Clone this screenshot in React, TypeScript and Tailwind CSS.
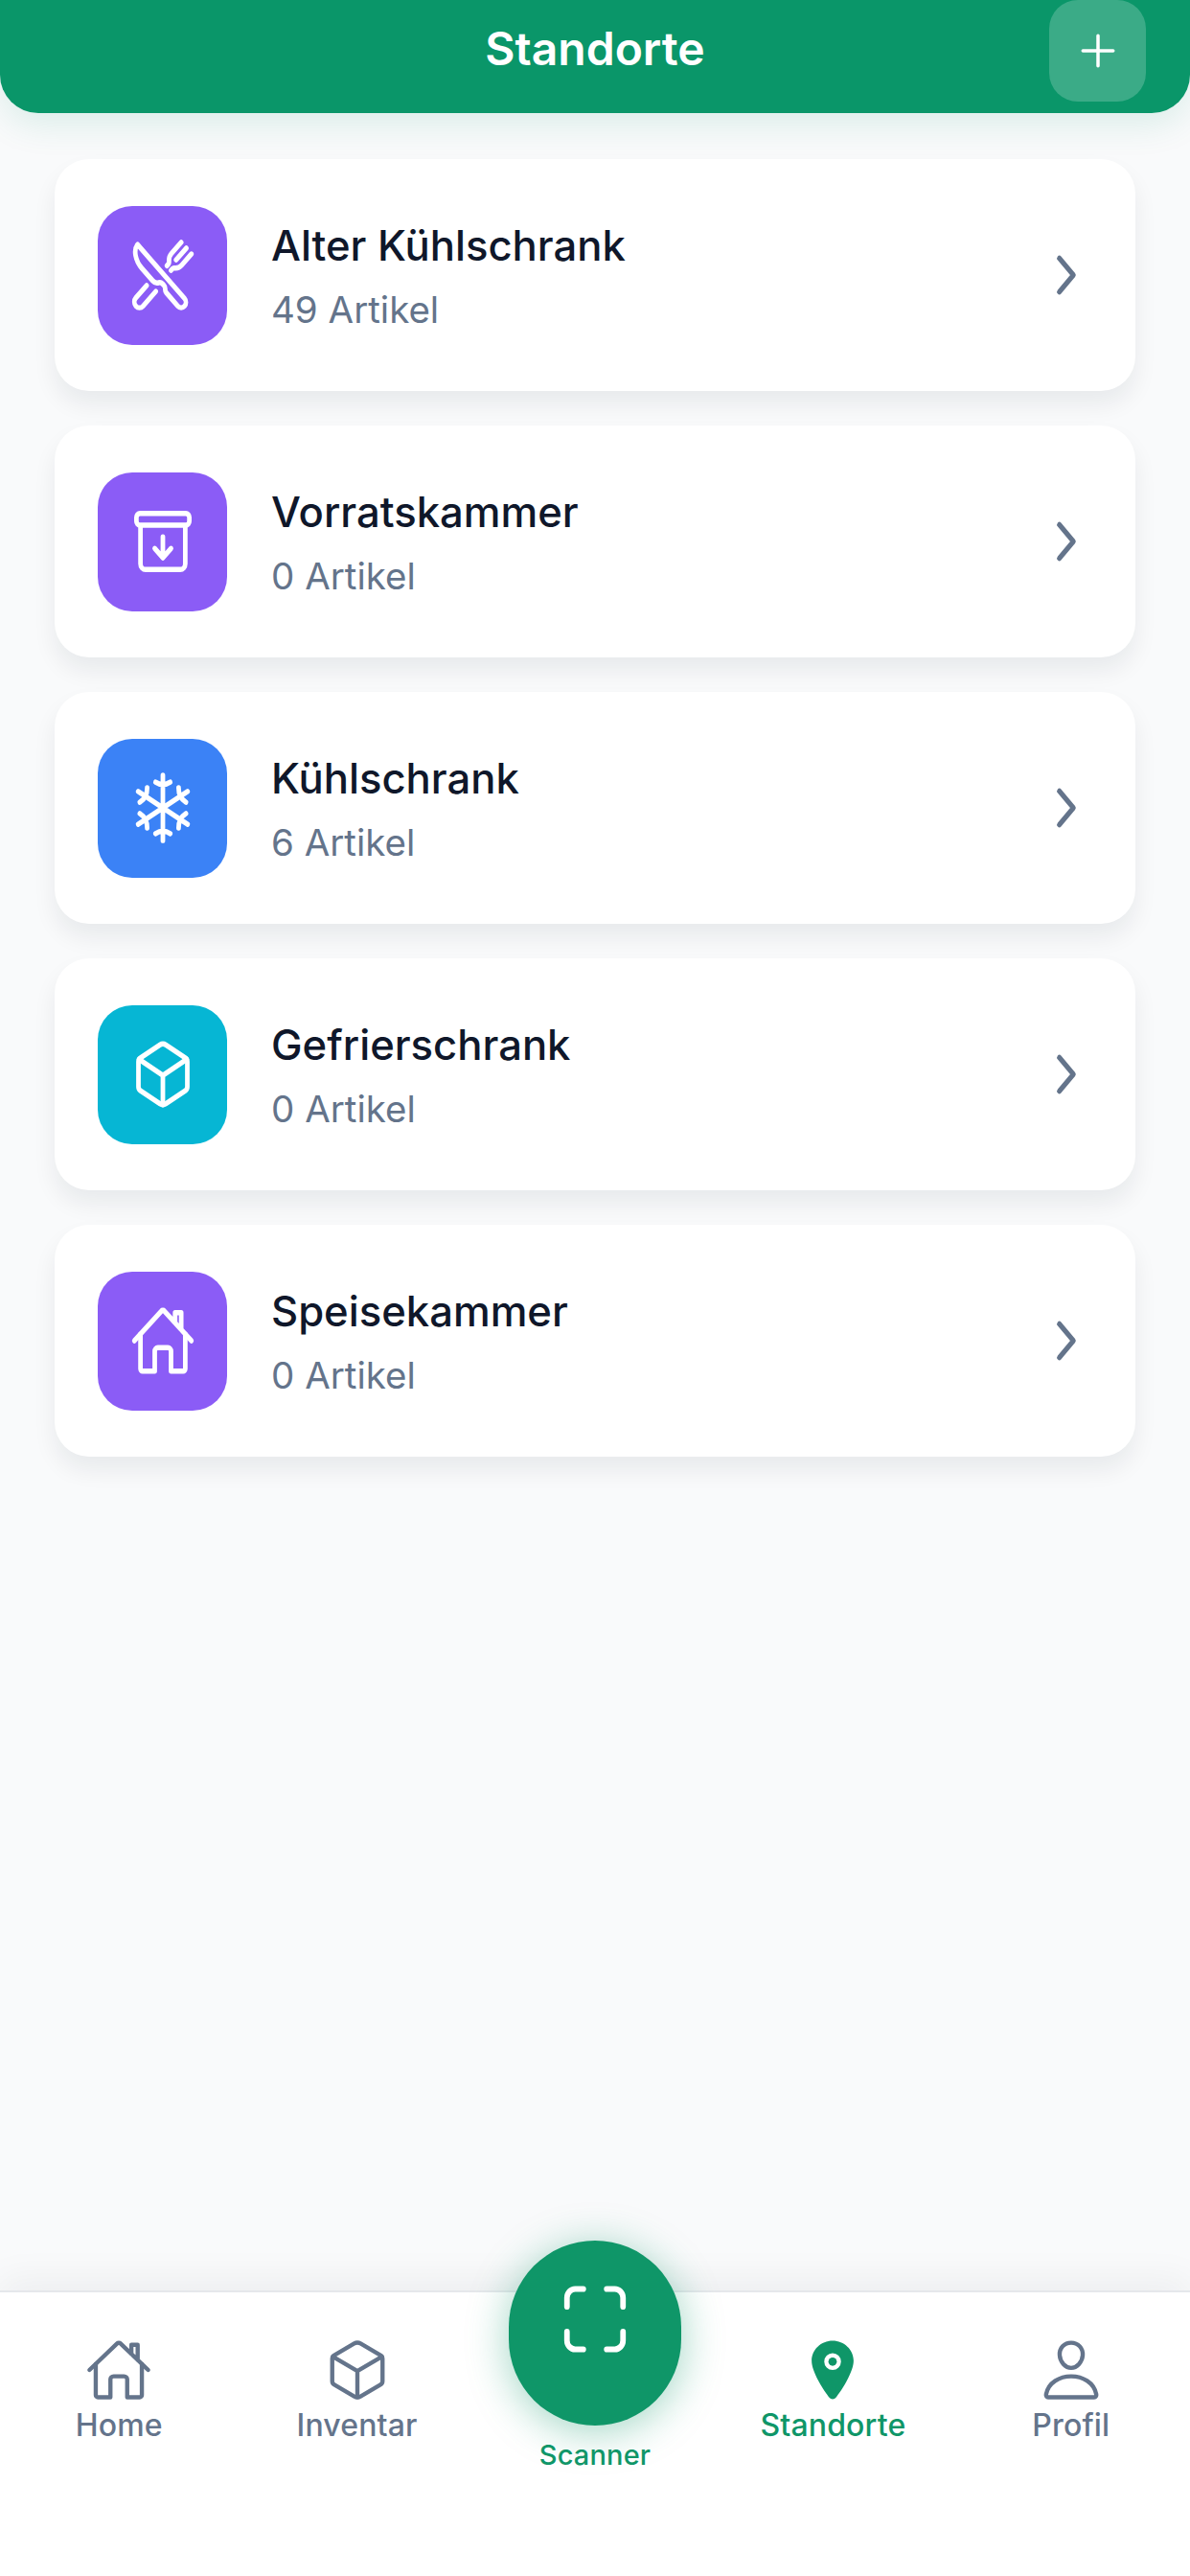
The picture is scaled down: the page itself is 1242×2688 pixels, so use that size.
import type { IconType } from 'react-icons';
import {
  IoAdd,
  IoArchiveOutline,
  IoChevronForward,
  IoCubeOutline,
  IoHomeOutline,
  IoLocation,
  IoPersonOutline,
  IoRestaurantOutline,
  IoScanOutline,
  IoSnowOutline,
} from 'react-icons/io5';

const locations: { name: string; count: number; tile: string; icon: IconType }[] = [
  { name: 'Alter Kühlschrank', count: 49, tile: 'bg-[#8b5cf6]', icon: IoRestaurantOutline },
  { name: 'Vorratskammer', count: 0, tile: 'bg-[#8b5cf6]', icon: IoArchiveOutline },
  { name: 'Kühlschrank', count: 6, tile: 'bg-[#3b82f6]', icon: IoSnowOutline },
  { name: 'Gefrierschrank', count: 0, tile: 'bg-[#06b6d4]', icon: IoCubeOutline },
  { name: 'Speisekammer', count: 0, tile: 'bg-[#8b5cf6]', icon: IoHomeOutline },
];

function LocationCard({ name, count, tile, icon: Icon }: (typeof locations)[number]) {
  return (
    <div className="flex h-[242px] items-center rounded-[36px] bg-white pl-[45px] pr-[46px] shadow-[0_14px_24px_rgba(15,23,42,0.07)]">
      <div className={`flex h-[145px] w-[135px] items-center justify-center rounded-[36px] text-white ${tile}`}>
        <Icon className="h-[78px] w-[68px] [&_*]:[stroke-width:36px]!" preserveAspectRatio="none" />
      </div>
      <div className="ml-[46px] flex-1">
        <div className="text-[43.6px] font-medium leading-[66px] text-[#0f172a]">{name}</div>
        <div className="mt-[5px] text-[38.5px] leading-[56px] text-[#64748b]">
          {count} Artikel
        </div>
      </div>
      <IoChevronForward className="h-[62px] w-[52px] text-[#64748b]" preserveAspectRatio="none" />
    </div>
  );
}

function NavItem({ label, icon: Icon, active }: { label: string; icon: IconType; active?: boolean }) {
  return (
    <div className={`flex flex-col items-center pt-[46px] ${active ? 'text-[#0f9668]' : 'text-[#64748b]'}`}>
      <Icon className="h-[70px] w-[70px]" />
      <span className="mt-[3px] text-[32px] font-[550] leading-[40px] tracking-[0.15px]">{label}</span>
    </div>
  );
}

export default function App() {
  return (
    <div className="flex h-[2688px] w-[1242px] flex-col overflow-hidden bg-[#f9fafb] font-['Inter',sans-serif]">
      <header className="flex h-[118px] shrink-0 justify-between rounded-b-[40px] bg-[#0a9669] px-[46px] shadow-[0_12px_36px_rgba(10,150,105,0.12)]">
        <div className="w-[101px]" />
        <div className="flex-1 pt-[22px] text-center text-[48px] font-semibold leading-[58px] text-white">Standorte</div>
        <button className="flex h-[106px] w-[101px] items-center justify-center rounded-[30px] bg-white/20 text-white">
          <IoAdd className="h-[56px] w-[56px]" />
        </button>
      </header>

      <main className="flex flex-1 flex-col gap-[36px] px-[57px] pt-[48px]">
        {locations.map((loc) => (
          <LocationCard key={loc.name} {...loc} />
        ))}
      </main>

      <nav className="grid h-[298px] shrink-0 grid-cols-5 border-t-2 border-[#e5e7eb] bg-white shadow-[0_-12px_36px_rgba(15,23,42,0.05)]">
        <NavItem label="Home" icon={IoHomeOutline} />
        <NavItem label="Inventar" icon={IoCubeOutline} />
        <div className="flex flex-col items-center">
          <div className="-mt-[54px] flex h-[193px] w-[180px] shrink-0 items-center justify-center rounded-full bg-[#0f9668] pb-[30px] text-white shadow-[0_6px_44px_rgba(15,150,104,0.4)]">
            <IoScanOutline className="h-[84px] w-[78px] [&_*]:[stroke-width:38px]!" preserveAspectRatio="none" />
          </div>
          <span className="mt-[13px] text-[29px] font-[550] leading-[36px] tracking-[0.15px] text-[#0f9668]">Scanner</span>
        </div>
        <NavItem label="Standorte" icon={IoLocation} active />
        <NavItem label="Profil" icon={IoPersonOutline} />
      </nav>
    </div>
  );
}
